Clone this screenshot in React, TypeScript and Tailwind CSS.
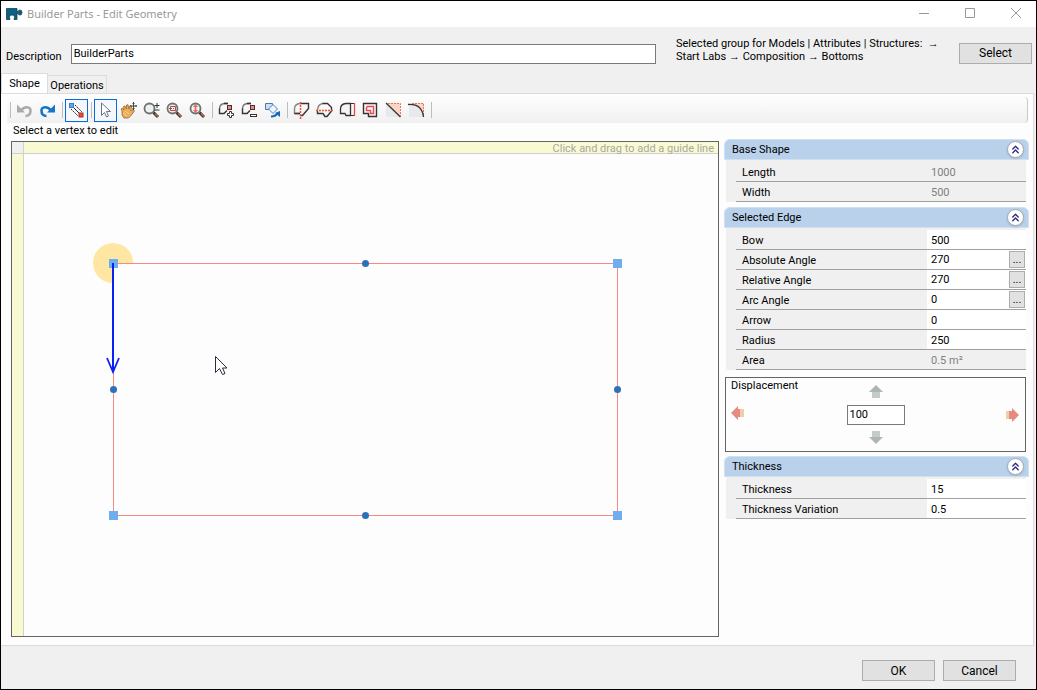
import { useState } from "react";
import type { ReactNode } from "react";
import { ChevronsUp } from "lucide-react";
import clsx from "clsx";

interface Property {
  id: string;
  label: string;
  value: string;
  readOnly?: boolean;
  picker?: boolean;
}

const BASE_SHAPE: Property[] = [
  { id: "length", label: "Length", value: "1000", readOnly: true },
  { id: "width", label: "Width", value: "500", readOnly: true },
];

const SELECTED_EDGE: Property[] = [
  { id: "bow", label: "Bow", value: "500" },
  { id: "abs-angle", label: "Absolute Angle", value: "270", picker: true },
  { id: "rel-angle", label: "Relative Angle", value: "270", picker: true },
  { id: "arc-angle", label: "Arc Angle", value: "0", picker: true },
  { id: "arrow", label: "Arrow", value: "0" },
  { id: "radius", label: "Radius", value: "250" },
  { id: "area", label: "Area", value: "0.5 m²", readOnly: true },
];

const THICKNESS: Property[] = [
  { id: "thickness", label: "Thickness", value: "15" },
  { id: "thickness-var", label: "Thickness Variation", value: "0.5" },
];

function PushButton({ children }: { children: ReactNode }) {
  return (
    <button
      type="button"
      className="h-[21px] w-[73px] shrink-0 border border-[#adadad] bg-[#e1e1e1] text-center text-xs leading-4"
    >
      {children}
    </button>
  );
}

function Section({ title, items }: { title: string; items: Property[] }) {
  const [open, setOpen] = useState(true);

  return (
    <section>
      <div className="flex h-[21px] items-center justify-between rounded-t-md border border-[#cfe0f1] bg-[#b9d1ea] pr-1 pl-[7px]">
        <h2>{title}</h2>
        <button
          type="button"
          aria-label={`Collapse ${title}`}
          onClick={() => setOpen(!open)}
          className="flex size-[17px] items-center justify-center rounded-full border border-[#a4a8b4] bg-white text-[#2b2b83] shadow-sm"
        >
          <ChevronsUp size={13} strokeWidth={2.5} />
        </button>
      </div>
      {open && (
        <div className="mr-[3px] ml-0.5 bg-[#f0f0f0] pt-0.5">
          {items.map((item) => (
            <div key={item.id} className="ml-2.5 flex h-5 items-stretch border-b border-[#a0a0a0]">
              <label htmlFor={item.id} className="flex flex-1 items-center pt-0.5 pl-1.5">
                {item.label}
              </label>
              <div className={clsx("flex w-[99px] items-center pr-px", !item.readOnly && "bg-white")}>
                <input
                  id={item.id}
                  type="text"
                  defaultValue={item.value}
                  readOnly={item.readOnly}
                  className={clsx(
                    "w-full min-w-0 bg-transparent pl-1 outline-none",
                    item.readOnly && "text-[#808080]",
                    !item.picker && "pt-0.5"
                  )}
                />
                {item.picker && (
                  <button
                    type="button"
                    aria-label={`Edit ${item.label}`}
                    className="h-[17px] w-4 shrink-0 border border-[#adadad] bg-[#e1e1e1] leading-4"
                  >
                    ...
                  </button>
                )}
              </div>
            </div>
          ))}
        </div>
      )}
    </section>
  );
}

function Tool({ label, active, children }: { label: string; active?: boolean; children: ReactNode }) {
  return (
    <button
      type="button"
      aria-label={label}
      title={label}
      className={clsx(
        "flex h-[23px] w-[23px] shrink-0 items-center justify-center border",
        active ? "border-[#0a6cd6] bg-[#f4f8fd]" : "border-transparent"
      )}
    >
      <svg width="17" height="17" viewBox="0 0 17 17" fill="none">
        {children}
      </svg>
    </button>
  );
}

function Separator() {
  return <span className="mr-0.5 ml-[3px] h-4 w-px shrink-0 bg-[#bdbdbd]" />;
}

function Lens() {
  return (
    <>
      <path d="M10.5 10.5 15 15" stroke="#43302e" strokeWidth="3" />
      <path d="m12 11.5 3 3" stroke="#b9724e" strokeWidth="1.5" />
      <circle cx="6.5" cy="6.5" r="5" fill="#eef1f2" stroke="#6d7274" strokeWidth="1.8" />
    </>
  );
}

function CutShape() {
  return (
    <>
      <path d="M10 1.500H6.500Q1.500 2 1.500 7" stroke="#7d777a" strokeWidth="1.400" />
      <path d="M6 1.500h4M1.500 6.500v5H6L9 8.500" stroke="#3b3034" strokeWidth="1.400" />
      <rect x="9.500" y="3.500" width="4" height="4" fill="#f1867b" stroke="#4a3032" />
    </>
  );
}

function Toolbar() {
  return (
    <div className="mr-[5px] ml-1.5 flex h-[26px] items-center rounded-r border-r border-[#c8c8c8] bg-linear-to-b from-[#fdfdfd] to-[#f0f0f0]">
      <Separator />
      <Tool label="Undo">
        <path d="M5 8.500C8 4 15 4 14.500 9c0 3-2 5-5 5" stroke="#aaaaaa" strokeWidth="2.600" />
        <path d="M1 2.500v8h8z" fill="#aaaaaa" />
      </Tool>
      <Tool label="Redo">
        <path d="M12 8.500C9 4 2 4 2.500 9c0 3 2 5 5 5" stroke="#1674c8" strokeWidth="2.600" />
        <path d="M16 2.500v8H8z" fill="#1674c8" />
      </Tool>
      <Separator />
      <Tool label="Vertices and edges" active>
        <rect x="1.500" y="1.500" width="4" height="4" fill="#63a4ee" stroke="#3b7dc8" />
        <path d="m7 3 7 7M3 7l7 7" stroke="#222" strokeDasharray="2 1" />
        <path d="m6 6 5 5" stroke="#222" />
        <rect x="11" y="11" width="4" height="4" fill="#e8483d" stroke="#b33128" />
      </Tool>
      <Separator />
      <Tool label="Select" active>
        <path d="M4.500 1v12.500l3-3 2 4.500 2-1-2-4.500h4z" fill="#fff" stroke="#6a7288" />
      </Tool>
      <Tool label="Pan">
        <path
          d="M2 9 1 7l1.500-1L4 8 3.500 4.500 5 4l1.500 3V3L8 2.700 9 7l1-3.500 1.500.5L11 9l2-1.500L14.500 9 11 13.500 8.500 16H4L2 13z"
          fill="#e8ae5b"
          stroke="#9b662b"
          strokeWidth=".8"
        />
        <path d="m5 9 4 3M3 11l4 3" stroke="#f8d79d" />
        <path d="M13.500 0v8M10 4h7M12.500 1.500l1-1 1 1M12.500 6.500l1 1 1-1M15.500 3l1 1-1 1" stroke="#333" strokeWidth=".9" />
      </Tool>
      <Tool label="Zoom in or out">
        <Lens />
        <path d="M14 1v5M11.500 3.500h5M11.500 8h5" stroke="#333" />
      </Tool>
      <Tool label="Zoom window">
        <Lens />
        <path d="M4.500 4.500h5v4h-5z" stroke="#b44641" />
        <path d="M3 6.500h7" stroke="#b44641" strokeDasharray="1 1" />
      </Tool>
      <Tool label="Zoom to fit">
        <Lens />
        <path d="M6.500 4v5" stroke="#ee6660" strokeWidth="1.600" />
        <path d="m4 5 2.500-3L9 5zM4 8l2.500 3L9 8z" fill="#ee6660" />
      </Tool>
      <Separator />
      <Tool label="Add vertex">
        <CutShape />
        <path d="M11.500 9.500h2v2h2v2h-2v2h-2v-2h-2v-2h2z" fill="#fff" stroke="#3b3034" />
      </Tool>
      <Tool label="Remove vertex">
        <CutShape />
        <rect x="9.500" y="12.500" width="6" height="2" fill="#fff" stroke="#3b3034" />
      </Tool>
      <Tool label="Rotate shape">
        <path d="M1.500 1.500h7v6h-7z" fill="#c9e0f5" stroke="#55779d" />
        <path d="m9 2.500 4.500 4.500L9 11.500 4.500 7z" fill="#eef6fd" stroke="#4486c6" />
        <path d="M7 14.500q5 0 7-4" stroke="#1769b5" strokeWidth="2" />
        <path d="m11 11 5-2v6z" fill="#1769b5" />
      </Tool>
      <Separator />
      <Tool label="Mirror horizontally">
        <path d="M7 1.500Q1.500 2 1.500 7v4.500H7" stroke="#8a8487" strokeWidth="1.400" />
        <path d="M7 1.500h8.500v5l-6 7H7M1.500 11.500H7" stroke="#3b3034" strokeWidth="1.400" />
        <path d="M7.500 0v17" stroke="#e5532f" strokeWidth="1.500" strokeDasharray="2 1" />
      </Tool>
      <Tool label="Mirror vertically">
        <path d="M1.500 8Q2 2 7 1.500" stroke="#8a8487" strokeWidth="1.400" />
        <path d="M6.500 1.500h5l4 4V8M1.500 9v2.500H7l2 3h2L15.500 9" stroke="#3b3034" strokeWidth="1.400" />
        <path d="M0 8.500h17" stroke="#e5532f" strokeWidth="1.500" strokeDasharray="2 1" />
      </Tool>
      <Tool label="Stretch edge">
        <path d="M11.500 1.500H7Q1.500 2 1.500 7v4.500H6l1 2h4.500z" fill="#f5f5f5" stroke="#3b3034" strokeWidth="1.300" />
        <path d="M12 1.500h3M12 13.500h3" stroke="#3b3034" />
        <path d="M15.500 1v13" stroke="#e54b47" strokeWidth="1.300" />
      </Tool>
      <Tool label="Offset">
        <path d="M1.500 1.500h13v13h-8v-3h-5z" stroke="#3b3034" strokeWidth="1.400" />
        <path d="M5.500 4.500h6v7h-3v-3h-4v-3z" stroke="#e54b47" strokeWidth="1.400" />
      </Tool>
      <Tool label="Chamfer">
        <path d="M1 1v14h14z" fill="#e7e9ea" />
        <path d="M2 1h13v13z" fill="#f8d6c3" />
        <path d="M3 1.500h12.500V14" stroke="#e07a66" strokeDasharray="2 1" />
        <path d="m1 1 14.500 14" stroke="#3b3034" strokeWidth="1.300" />
      </Tool>
      <Tool label="Fillet">
        <path d="M1 2v13h14Q14 2 1 2" fill="#e7e9ea" />
        <path d="M5 1h11v13Q14 3 5 2" fill="#f8d6c3" />
        <path d="M4 1.500h11.500V14" stroke="#e07a66" strokeDasharray="2 1" />
        <path d="M0 2.500q14-1 15.500 12.500" stroke="#3b3034" strokeWidth="1.300" />
      </Tool>
      <Separator />
    </div>
  );
}

const VERTICES = [
  [89, 109],
  [593, 109],
  [89, 361],
  [593, 361],
];

const MIDPOINTS = [
  [341, 109],
  [89, 235],
  [593, 235],
  [341, 361],
];

function Drawing() {
  return (
    <svg className="h-full w-full" aria-label="Shape drawing">
      <path d="M89 109V129A20 20 0 1 1 109 109z" fill="#ffe7a3" />
      <path d="M89.500 109.500h504v252h-504z" fill="none" stroke="#f98880" />
      {VERTICES.map(([x, y]) => (
        <rect key={`${x}-${y}`} x={x - 4} y={y - 4} width="9" height="9" fill="#6fadf1" />
      ))}
      {MIDPOINTS.map(([x, y]) => (
        <circle key={`${x}-${y}`} cx={x + 0.5} cy={y + 0.5} r="3.500" fill="#2b73b8" />
      ))}
      <path d="M89 109v109" stroke="#0a22f5" strokeWidth="2" />
      <path d="m83 204 6 14 6-14" fill="none" stroke="#0a22f5" strokeWidth="1.800" />
      <path
        d="M191.500 202.500v16l4-4 3 6 2.500-1-2.500-5.500h4.500z"
        fill="#fff"
        stroke="#2f2b3a"
        strokeWidth="1"
      />
    </svg>
  );
}

function DisplaceArrow({ label, children }: { label: string; children: ReactNode }) {
  return (
    <button type="button" aria-label={label} className="size-3.5">
      <svg width="14" height="14" viewBox="0 0 14 14">
        {children}
      </svg>
    </button>
  );
}

function Displacement() {
  return (
    <fieldset className="mt-[7px] mr-[3px] mb-1 ml-px flex h-[75px] items-center justify-between border border-[#646464] bg-[#fdfdfd] px-[5px]">
      <div className="flex flex-1 flex-col items-start gap-3.5 self-start pt-px">
        <label htmlFor="displacement">Displacement</label>
        <DisplaceArrow label="Move left">
          <path d="M0 7l7-7v14z" fill="#e58b80" />
          <path d="M7 3h3v8H7z" fill="#e58b80" />
          <path d="M9 3h4v8H9z" fill="#edcfae" />
        </DisplaceArrow>
      </div>
      <div className="flex flex-col items-center gap-1.5">
        <DisplaceArrow label="Move up">
          <path d="M7 0l7 7H0z" fill="#adb5b5" />
          <path d="M3 7h8v6H3z" fill="#c5caca" />
        </DisplaceArrow>
        <input
          id="displacement"
          type="text"
          defaultValue="100"
          className="h-5 w-[58px] border border-[#7a7a7a] bg-white px-0.5 outline-none"
        />
        <DisplaceArrow label="Move down">
          <path d="M3 0h8v6H3z" fill="#c5caca" />
          <path d="M0 6h14l-7 7z" fill="#adb5b5" />
        </DisplaceArrow>
      </div>
      <div className="flex flex-1 justify-end">
        <DisplaceArrow label="Move right">
          <path d="M0 3h4v8H0z" fill="#edcfae" />
          <path d="M3 3h3v8H3zM6 0l7 7-7 7z" fill="#e58b80" />
        </DisplaceArrow>
      </div>
    </fieldset>
  );
}

function TitleBar() {
  return (
    <header className="flex h-[26px] shrink-0 items-center bg-white pl-[5px] text-[#999999]">
      <svg width="17" height="14" viewBox="0 0 17 14" aria-hidden="true">
        <path
          d="M.5 1.500h10.500v3h1q.5-1.500 2-1.500 2 0 2 2.500t-2 2.500q-1.500 0-2-1.500h-1v6H8q1.500-4.500-2-4.500T4 12.500H.500z"
          fill="#0b6183"
          stroke="#164052"
          strokeWidth=".8"
        />
      </svg>
      <h1 className="ml-1 flex-1 font-['Noto_Sans',sans-serif] leading-4">Builder Parts - Edit Geometry</h1>
      <div className="flex items-center gap-[34px] pr-3.5">
        <button type="button" aria-label="Minimize">
          <svg width="12" height="12" stroke="currentColor">
            <path d="M1 5.500h10" />
          </svg>
        </button>
        <button type="button" aria-label="Maximize">
          <svg width="12" height="12" fill="none" stroke="currentColor">
            <path d="M1.500 .5h9v9h-9z" />
          </svg>
        </button>
        <button type="button" aria-label="Close">
          <svg width="12" height="12" stroke="currentColor">
            <path d="m1 0 10 10M11 0 1 10" />
          </svg>
        </button>
      </div>
    </header>
  );
}

export default function App() {
  return (
    <div className="flex min-h-screen flex-col border border-black bg-[#f0f0f0] font-['Roboto','Liberation_Sans',sans-serif] text-[11px] leading-[13px] text-black">
      <TitleBar />

      <div className="flex h-[46px] shrink-0 items-center gap-2 pr-1 pl-[5px]">
        <label htmlFor="description" className="pt-3 pr-px">
          Description
        </label>
        <input
          id="description"
          type="text"
          defaultValue="BuilderParts"
          className="mt-[7px] h-5 min-w-0 flex-1 border border-[#7a7a7a] bg-white px-0.5 outline-none"
        />
        <p className="ml-3 w-[275px] shrink-0">
          Selected group for Models | Attributes | Structures:&nbsp; →
          <br />
          Start Labs → Composition → Bottoms
        </p>
        <div className="pt-1.5">
          <PushButton>Select</PushButton>
        </div>
      </div>

      <div role="tablist" className="flex h-5 shrink-0 items-end">
        <button
          type="button"
          role="tab"
          aria-selected="true"
          className="h-5 w-[47px] border-x border-t border-[#dcdcdc] bg-white"
        >
          Shape
        </button>
        <button
          type="button"
          role="tab"
          aria-selected="false"
          className="h-[18px] w-[59px] border-t border-r border-[#dcdcdc] pt-0.5"
        >
          Operations
        </button>
      </div>

      <main className="mr-0.5 flex flex-1 flex-col border-y border-r border-[#dcdcdc] bg-[#fdfdfd] pt-[3px]">
        <Toolbar />
        <div className="flex flex-1 gap-[5px] pr-1 pb-2 pl-2.5">
          <div className="flex min-w-0 flex-1 flex-col">
            <p className="h-[18px] pt-px pl-0.5">Select a vertex to edit</p>
            <div className="grid flex-1 grid-cols-[12px_1fr] grid-rows-[12px_1fr] border border-[#646464] bg-[#fdfdfd]">
              <div className="border-r border-b border-[#d0d0d0] bg-[#f0f0f0]" />
              <div className="border-b border-[#d0d0d0] bg-[#fafad2] pr-1 text-right leading-[13px] text-[#a9a9a0]">
                Click and drag to add a guide line
              </div>
              <div className="border-r border-[#d0d0d0] bg-[#fafad2]" />
              <Drawing />
            </div>
          </div>

          <aside className="w-[305px] shrink-0 pt-4">
            <Section title="Base Shape" items={BASE_SHAPE} />
            <div className="h-[5px]" />
            <Section title="Selected Edge" items={SELECTED_EDGE} />
            <Displacement />
            <Section title="Thickness" items={THICKNESS} />
          </aside>
        </div>
      </main>

      <footer className="flex h-[43px] shrink-0 items-center justify-end gap-2 pt-1.5 pr-5">
        <PushButton>OK</PushButton>
        <PushButton>Cancel</PushButton>
      </footer>
    </div>
  );
}
